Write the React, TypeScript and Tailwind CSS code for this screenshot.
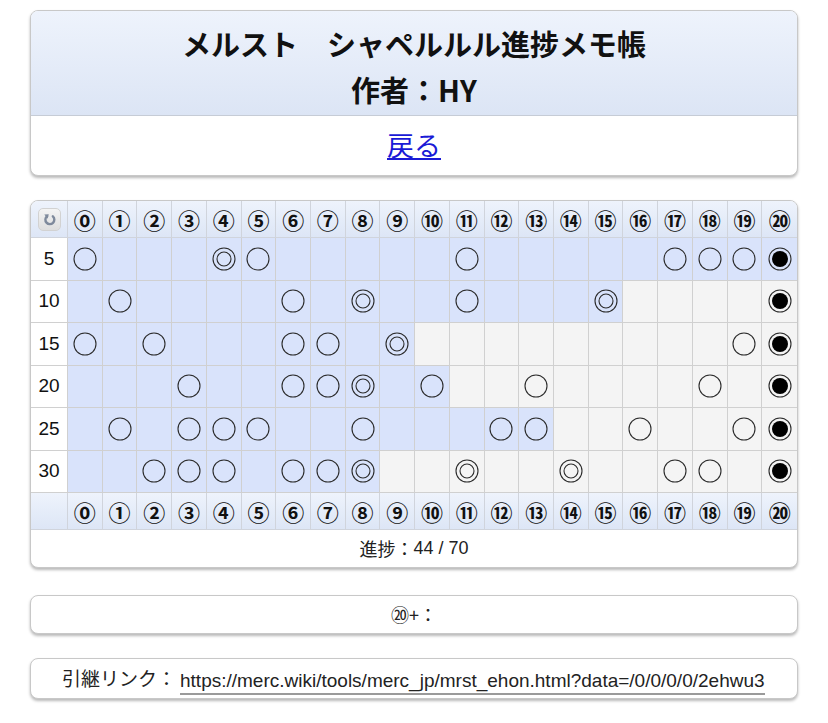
import React from "react";

const CIRCLED = ["⓪", "①", "②", "③", "④", "⑤", "⑥", "⑦", "⑧", "⑨", "⑩", "⑪", "⑫", "⑬", "⑭", "⑮", "⑯", "⑰", "⑱", "⑲", "⑳"];

// 1 = ○, 2 = ◎, 3 = ◉
type Row = { label: number; blueUntil: number; marks: Record<number, number> };

const ROWS: Row[] = [
  { label: 5, blueUntil: 20, marks: { 0: 1, 4: 2, 5: 1, 11: 1, 17: 1, 18: 1, 19: 1, 20: 3 } },
  { label: 10, blueUntil: 15, marks: { 1: 1, 6: 1, 8: 2, 11: 1, 15: 2, 20: 3 } },
  { label: 15, blueUntil: 9, marks: { 0: 1, 2: 1, 6: 1, 7: 1, 9: 2, 19: 1, 20: 3 } },
  { label: 20, blueUntil: 10, marks: { 3: 1, 6: 1, 7: 1, 8: 2, 10: 1, 13: 1, 18: 1, 20: 3 } },
  { label: 25, blueUntil: 13, marks: { 1: 1, 3: 1, 4: 1, 5: 1, 8: 1, 12: 1, 13: 1, 16: 1, 19: 1, 20: 3 } },
  { label: 30, blueUntil: 8, marks: { 2: 1, 3: 1, 4: 1, 6: 1, 7: 1, 8: 2, 11: 2, 14: 2, 17: 1, 18: 1, 20: 3 } },
];

function Mark({ kind }: { kind: number }) {
  if (!kind) return null;
  return (
    <svg width="24" height="24" viewBox="0 0 24 24">
      <circle cx="12" cy="12" r="11" fill="none" stroke="#2b2b2b" strokeWidth="1.1" />
      {kind === 2 && <circle cx="12" cy="12" r="7" fill="none" stroke="#2b2b2b" strokeWidth="1.1" />}
      {kind === 3 && <circle cx="12" cy="12" r="8" fill="#000" />}
    </svg>
  );
}

function ResetButton() {
  return (
    <div className="w-[23px] h-[23px] rounded-[5px] border border-[#d2d2d2] bg-linear-to-b from-[#f4f4f4] to-[#dedede] flex items-center justify-center">
      <svg width="13" height="13" viewBox="0 0 14 14" fill="none">
        <path d="M4.4 3.4A4.8 4.8 0 1 0 10.6 3.6" stroke="#7f8a9c" strokeWidth="2.6" strokeLinecap="round" />
        <path d="M1.4 1.6L6.2 1.4L5 6.2Z" fill="#7f8a9c" />
      </svg>
    </div>
  );
}

function Card({ children, className = "" }: { children: React.ReactNode; className?: string }) {
  return (
    <div className={`mx-[30px] rounded-[8px] border border-[#c8c8c8] bg-white overflow-hidden shadow-[0_2px_3px_rgba(0,0,0,0.28)] ${className}`}>
      {children}
    </div>
  );
}

function HeaderCells() {
  return (
    <>
      {CIRCLED.map((c, i) => (
        <div
          key={c}
          className={`h-[37px] flex items-center justify-center border-b border-[#d0d4dc] bg-linear-to-b from-[#eef3fc] to-[#dde6f6] text-[22px] font-bold text-[#111] font-['Noto_Sans_CJK_JP',sans-serif] ${i < 20 ? "border-r" : ""}`}
        >
          {c}
        </div>
      ))}
    </>
  );
}

export default function App() {
  return (
    <div className="min-h-screen bg-white pt-[10px] pb-[20px] font-['Liberation_Sans','Noto_Sans_CJK_JP',sans-serif] text-[#111]">
      <Card>
        <div className="bg-linear-to-b from-[#eef3fc] to-[#dce5f5] border-b border-[#c6ccd6] pt-[9px] pb-[3px] text-center font-['Noto_Sans_CJK_JP',sans-serif] font-bold text-[29px] leading-[46px]">
          <div>メルスト　シャペルルル進捗メモ帳</div>
          <div>作者：HY</div>
        </div>
        <div className="h-[59px] flex items-center justify-center">
          <a href="#" className="text-[27px] text-[#1a1ad6] underline font-['Noto_Sans_CJK_JP',sans-serif]">
            戻る
          </a>
        </div>
      </Card>

      <Card className="mt-[24px]">
        <div className="grid grid-cols-[37px_repeat(21,1fr)]">
          <div className="h-[37px] flex items-center justify-center border-r border-b border-[#d0d4dc] bg-linear-to-b from-[#eef3fc] to-[#dde6f6]">
            <ResetButton />
          </div>
          <HeaderCells />

          {ROWS.map((row) => (
            <React.Fragment key={row.label}>
              <div className="h-[42.5px] flex items-center justify-center border-r border-b border-[#d0d0d0] bg-white text-[19px]">
                {row.label}
              </div>
              {CIRCLED.map((_, c) => (
                <div
                  key={c}
                  className={`h-[42.5px] flex items-center justify-center border-b border-[#d0d0d0] ${c < 20 ? "border-r" : ""} ${
                    c <= row.blueUntil ? "bg-[#d9e3fb]" : "bg-[#f4f4f4]"
                  }`}
                >
                  <Mark kind={row.marks[c] ?? 0} />
                </div>
              ))}
            </React.Fragment>
          ))}

          <div className="h-[37px] border-r border-b border-[#d0d4dc] bg-linear-to-b from-[#eef3fc] to-[#dde6f6]" />
          <HeaderCells />
        </div>
        <div className="h-[37px] flex items-center justify-center text-[18px] text-[#222]">
          <span className="font-['Noto_Sans_CJK_JP',sans-serif]">進捗：</span>
          <span>44 / 70</span>
        </div>
      </Card>

      <Card className="mt-[27px]">
        <div className="h-[37px] flex items-center justify-center text-[18px] text-[#222] font-['Noto_Sans_CJK_JP',sans-serif]">
          ⑳+：
        </div>
      </Card>

      <Card className="mt-[24px]">
        <div className="h-[39px] flex items-center pl-[31px] text-[19px] text-[#222]">
          <span className="font-['Noto_Sans_CJK_JP',sans-serif] text-[19px]">引継リンク：</span>
          <span className="ml-[4px] border-b-2 border-[#9a9a9a] leading-[25px] mt-[6px]">
            https://merc.wiki/tools/merc_jp/mrst_ehon.html?data=/0/0/0/0/2ehwu3
          </span>
        </div>
      </Card>
    </div>
  );
}
